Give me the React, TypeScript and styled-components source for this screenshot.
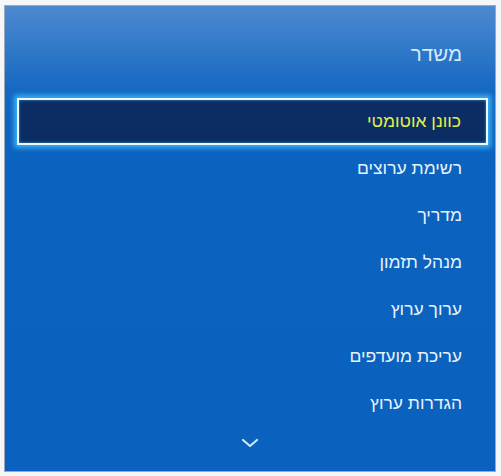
import React from "react"
import styled, { createGlobalStyle } from "styled-components"

const GlobalStyle = createGlobalStyle`
    html, body {
        margin: 0;
        padding: 0;
        background: #f4f6f8;
    }
    body {
        font-family: "Liberation Sans", "DejaVu Sans", sans-serif;
    }
`

const Page = styled.div`
    width: 501px;
    height: 476px;
    box-sizing: border-box;
    padding: 5px 5px 4px 4px;
`

const Panel = styled.div`
    box-sizing: border-box;
    height: 467px;
    border: 1px solid #9aa8b8;
    background: linear-gradient(
        to bottom,
        #4d89d0 0px,
        #2f78c8 45px,
        #1468c2 85px,
        #0b63bf 120px,
        #0a62be 100%
    );
    display: flex;
    flex-direction: column;
    direction: rtl;
`

const Header = styled.div`
    height: 92px;
    display: flex;
    align-items: center;
    padding-right: 33px;
    padding-top: 4px;
    box-sizing: border-box;
    font-size: 20.5px;
    color: #d4e9fb;
`

const List = styled.div`
    display: flex;
    flex-direction: column;
`

const Item = styled.div<{ $selected?: boolean }>`
    box-sizing: border-box;
    height: 47px;
    display: flex;
    align-items: center;
    font-size: 17.5px;
    color: ${(p) => (p.$selected ? "#e3ef4a" : "#e8f2fc")};
    padding-right: ${(p) => (p.$selected ? "25px" : "33px")};
    ${(p) =>
        p.$selected &&
        `
        margin: 0 7px 0 12px;
        background: #0b2d63;
        border: 2px solid #eaf8ff;
        box-shadow: 0 0 5px 3px rgba(70, 195, 255, 0.8), inset 0 0 3px rgba(120, 210, 255, 0.6);
    `}
`

const More = styled.div`
    display: flex;
    justify-content: center;
    padding-top: 11px;
    direction: ltr;
`

const items = ["רשימת ערוצים", "מדריך", "מנהל תזמון", "ערוך ערוץ", "עריכת מועדפים", "הגדרות ערוץ"]

export default function App() {
    return (
        <>
            <GlobalStyle />
            <Page>
                <Panel>
                    <Header>משדר</Header>
                    <List>
                        <Item $selected>כוונן אוטומטי</Item>
                        {items.map((label) => (
                            <Item key={label}>{label}</Item>
                        ))}
                    </List>
                    <More>
                        <svg width="18" height="10" viewBox="0 0 18 10">
                            <path
                                d="M2 2 L9 8 L16 2"
                                fill="none"
                                stroke="#cfe6fb"
                                strokeWidth="2.2"
                                strokeLinecap="round"
                                strokeLinejoin="round"
                            />
                        </svg>
                    </More>
                </Panel>
            </Page>
        </>
    )
}
